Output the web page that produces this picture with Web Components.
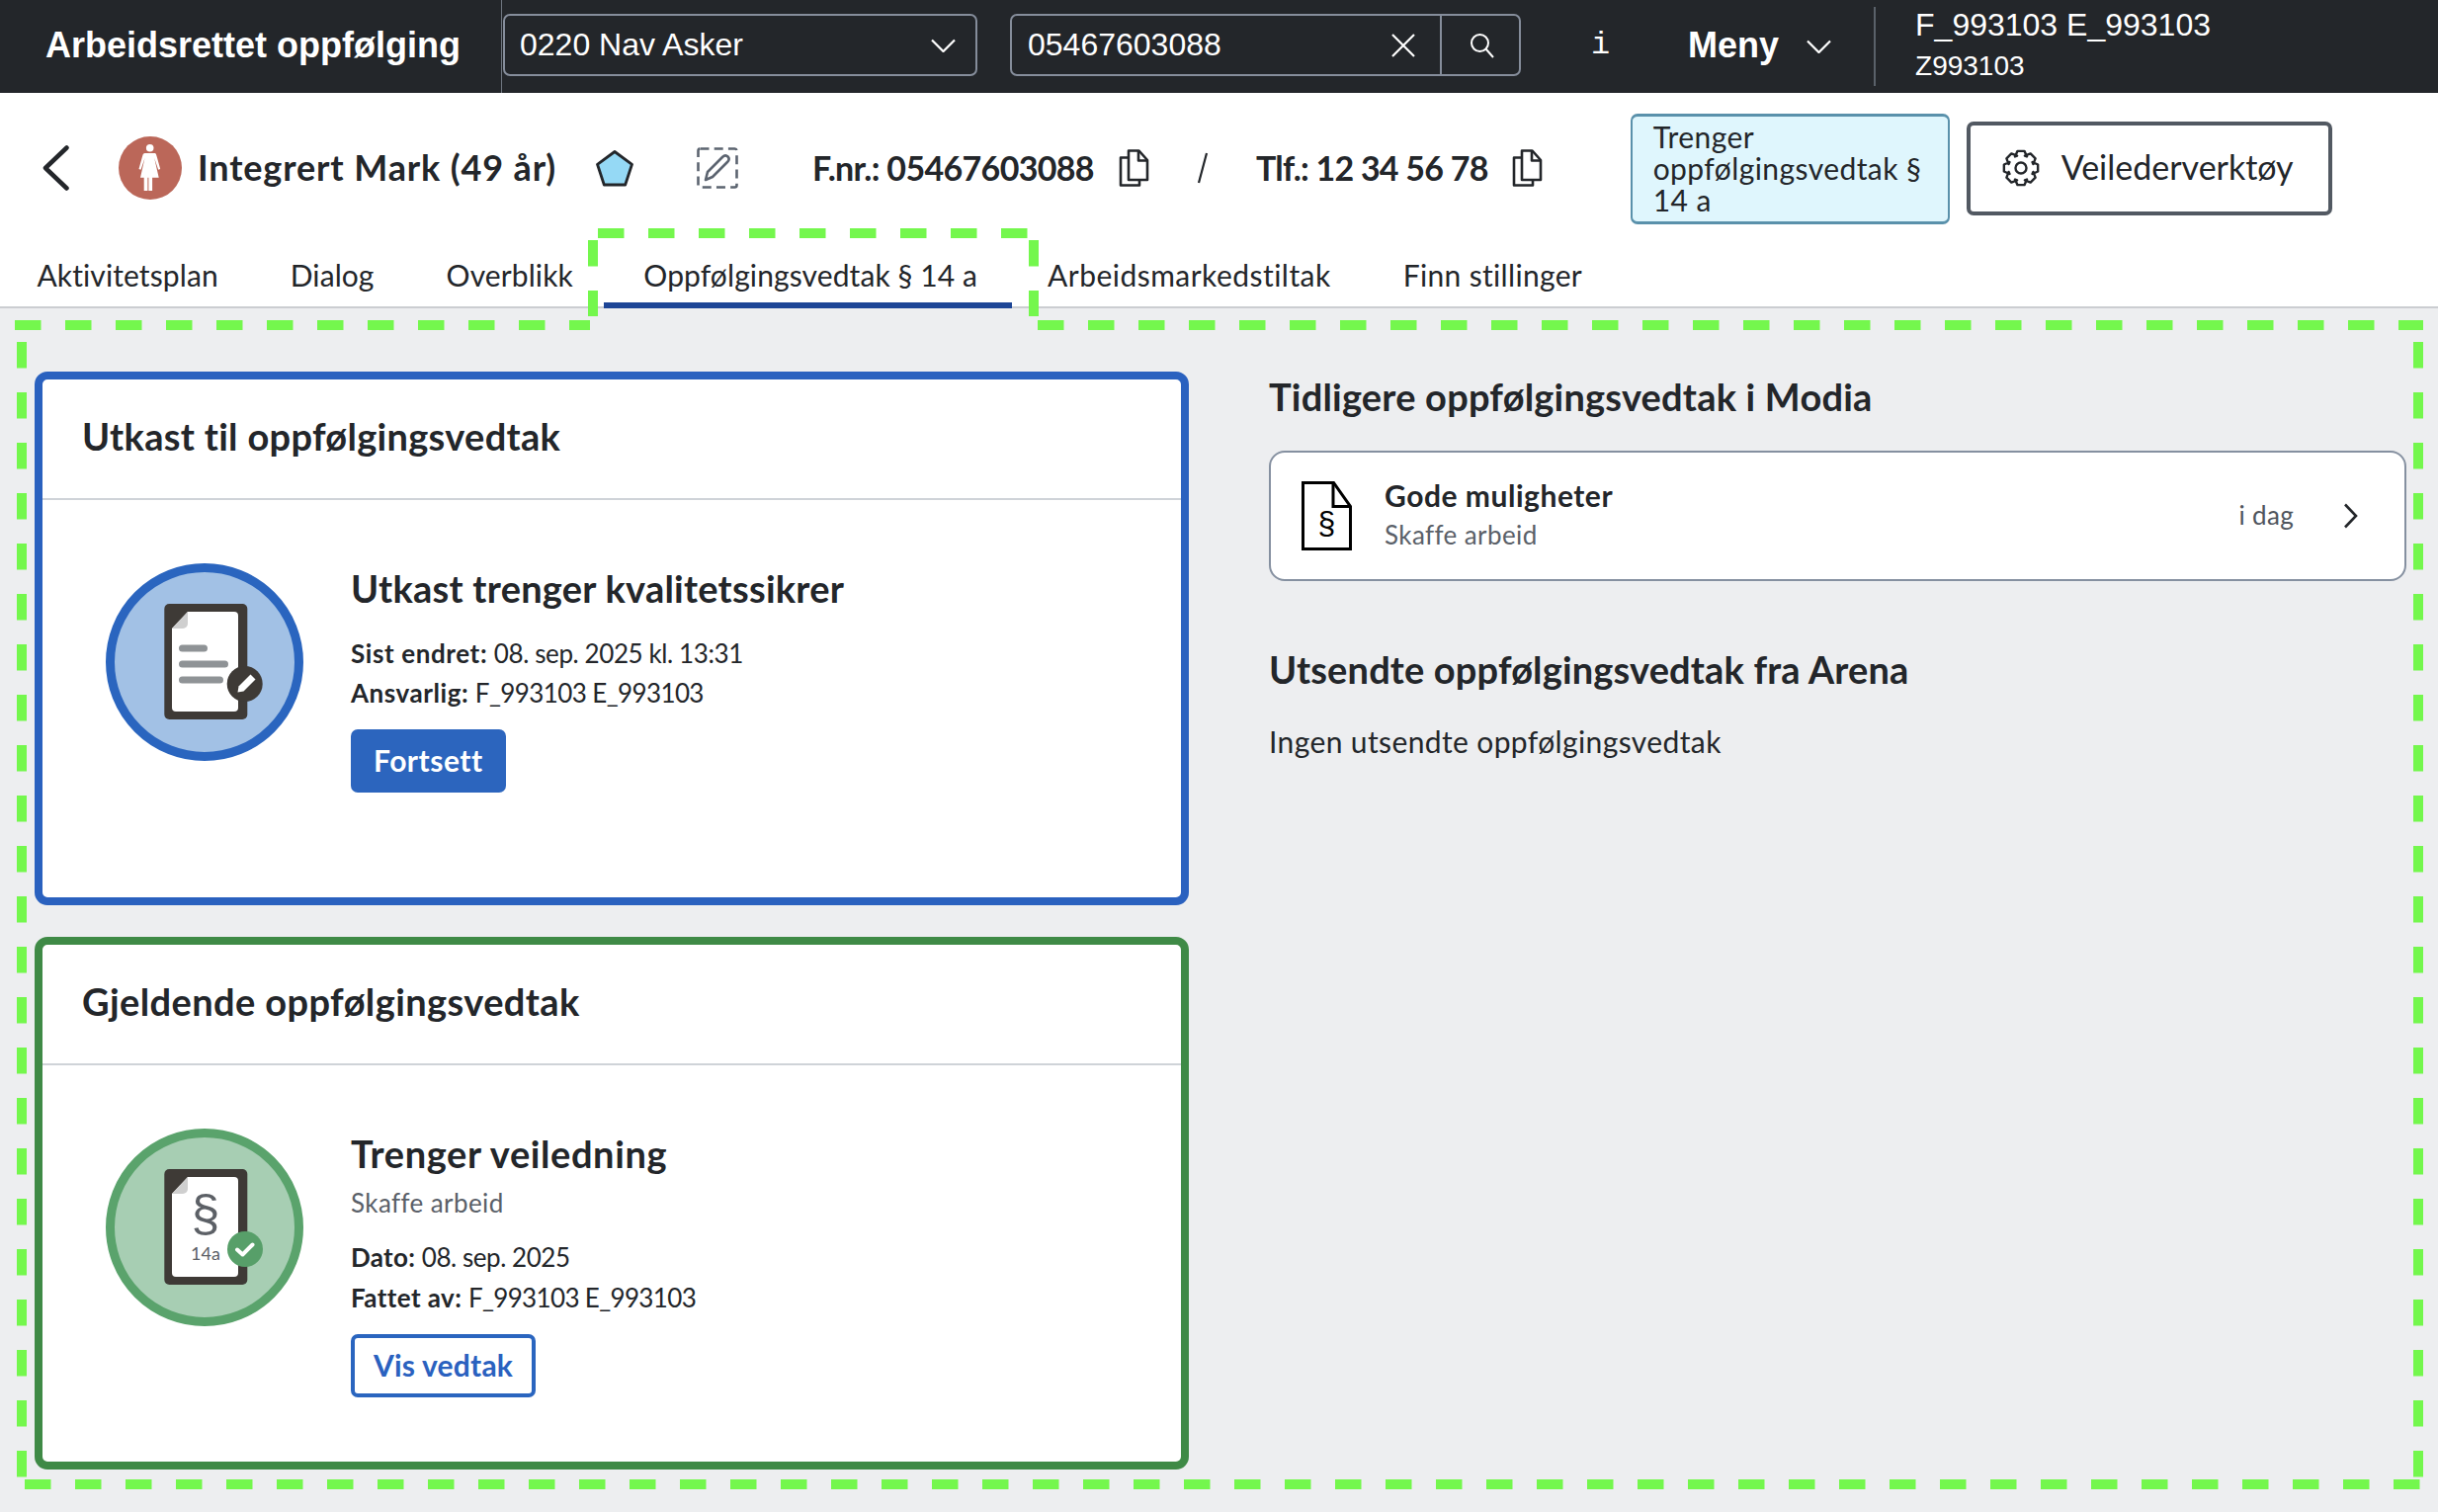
<!DOCTYPE html>
<html lang="no"><head><meta charset="utf-8"><title>Arbeidsrettet oppfølging</title>
<style>
html,body{margin:0;padding:0}
body{position:relative;width:2467px;height:1530px;overflow:hidden;background:#edeef0;color:#23262a;font-family:Lato,"Noto Sans",sans-serif}
</style></head><body>
<app-header></app-header>
<person-bar></person-bar>
<nav-tabs>
  <nav-tab style="letter-spacing:.1px">Aktivitetsplan</nav-tab>
  <nav-tab style="letter-spacing:.1px">Dialog</nav-tab>
  <nav-tab style="letter-spacing:.1px">Overblikk</nav-tab>
  <nav-tab active style="letter-spacing:.1px">Oppfølgingsvedtak § 14 a</nav-tab>
  <nav-tab style="letter-spacing:.47px">Arbeidsmarkedstiltak</nav-tab>
  <nav-tab style="letter-spacing:.33px">Finn stillinger</nav-tab>
</nav-tabs>
<page-main>
  <vedtak-card slot="left" color="#2a61bf">
    <span slot="title" style="letter-spacing:.3px">Utkast til oppfølgingsvedtak</span>
    <doc-art slot="art" kind="draft"></doc-art>
    <card-title style="letter-spacing:.25px">Utkast trenger kvalitetssikrer</card-title>
    <info-line style="margin-top:22px"><b style="letter-spacing:.6px">Sist endret:</b> <span style="letter-spacing:-.4px">08. sep. 2025 kl. 13:31</span></info-line>
    <info-line><b style="letter-spacing:.55px">Ansvarlig:</b> <span style="letter-spacing:-.6px">F_993103 E_993103</span></info-line>
    <action-button variant="primary" style="margin-top:17px;letter-spacing:.5px">Fortsett</action-button>
  </vedtak-card>
  <vedtak-card slot="left" color="#3f8a46">
    <span slot="title" style="letter-spacing:.4px">Gjeldende oppfølgingsvedtak</span>
    <doc-art slot="art" kind="final"></doc-art>
    <card-title style="letter-spacing:.6px">Trenger veiledning</card-title>
    <info-line style="margin-top:6px;color:#5a6068;letter-spacing:.4px">Skaffe arbeid</info-line>
    <info-line style="margin-top:15px"><b style="letter-spacing:.3px">Dato:</b> <span style="letter-spacing:-.45px">08. sep. 2025</span></info-line>
    <info-line style="margin-top:1px"><b style="letter-spacing:.4px">Fattet av:</b> <span style="letter-spacing:-.65px">F_993103 E_993103</span></info-line>
    <action-button variant="secondary" style="margin-top:17px;letter-spacing:.2px">Vis vedtak</action-button>
  </vedtak-card>
  <section-heading slot="right" style="letter-spacing:.2px">Tidligere oppfølgingsvedtak i Modia</section-heading>
  <history-item slot="right" style="margin-top:26px"></history-item>
  <section-heading slot="right" style="margin-top:64px;letter-spacing:.15px">Utsendte oppfølgingsvedtak fra Arena</section-heading>
  <plain-text slot="right" style="margin-top:24px;letter-spacing:.38px">Ingen utsendte oppfølgingsvedtak</plain-text>
</page-main>
<highlight-frame></highlight-frame>
<script>
function def(name, html, setup){
  const t=document.createElement('template'); t.innerHTML=html;
  customElements.define(name,class extends HTMLElement{
    connectedCallback(){ if(this.shadowRoot) return;
      this.attachShadow({mode:'open'}).appendChild(t.content.cloneNode(true));
      if(setup) setup(this,this.shadowRoot);
    }
  });
}
const chev='<svg width="25" height="14" viewBox="0 0 25 14" fill="none" stroke="#fff" stroke-width="2.2"><path d="M1 1.5l11.5 11.5L24 1.5"/></svg>';
const copy='<svg width="31" height="38" viewBox="0 0 31 38" fill="none" stroke="#23262a" stroke-width="2.6" stroke-linejoin="round"><path d="M10 1.5h10.5l8.5 9.5v20H10z"/><path d="M20 1.5v10h9"/><path d="M10 8.5H2v28h19V31"/></svg>';

def('app-header',`<style>
:host{display:flex;height:94px;background:#23262a;color:#fff;font-family:"Liberation Sans",Arial,sans-serif;align-items:center}
.t{width:461px;padding-left:46px;font:700 36px/91px "Liberation Sans",Arial,sans-serif;height:94px}
.v{width:1px;height:94px;background:#6f7680}
.box{height:63px;margin-top:-3px;box-sizing:border-box;border:2px solid #858d9b;border-radius:7px;display:flex;align-items:center;font-size:32px}
.sel{width:480px;margin-left:1px;padding:0 20px 0 15px;justify-content:space-between}
.srch{width:517px;margin-left:33px;padding-left:16px}
.srch .q{flex:1}
.x{margin-right:25px;display:flex}
.b{width:80px;height:100%;border-left:2px solid #858d9b;display:flex;align-items:center;justify-content:center;padding-left:3px;box-sizing:border-box}
.i{width:161px;text-align:center;font:400 32px "Liberation Mono",monospace;margin-right:8px;margin-top:-3px}
.m{font-weight:700;font-size:36px;margin-top:-2px}
.c{margin-left:28px;display:flex;margin-right:43px}
.s{width:2px;height:80px;background:#5a616a}
.u{margin-left:40px;align-self:flex-start;padding-top:5px;font-size:32px;line-height:41px}
.z{font-size:28px}
</style>
<div class="t">Arbeidsrettet oppfølging</div><div class="v"></div>
<div class="box sel"><span>0220 Nav Asker</span>${chev}</div>
<div class="box srch"><span class="q">05467603088</span>
<span class="x"><svg width="24" height="24" viewBox="0 0 24 24" stroke="#fff" stroke-width="2.2"><path d="M1 1l22 22M23 1L1 23"/></svg></span>
<span class="b"><svg width="25" height="26" viewBox="0 0 25 26" fill="none" stroke="#fff" stroke-width="2"><circle cx="10.5" cy="10.5" r="8.5"/><path d="M16.5 16.5l7.5 8.5"/></svg></span></div>
<div class="i">i</div><div class="m">Meny</div><div class="c">${chev}</div><div class="s"></div>
<div class="u"><div>F_993103 E_993103</div><div class="z">Z993103</div></div>`);

def('person-bar',`<style>
:host{display:flex;align-items:center;height:152px;background:#fff;padding-left:43px;font-size:36px;font-weight:700}
svg{display:block;flex:none}
.n{margin-left:16px;letter-spacing:.86px;white-space:nowrap;margin-top:-2px}
.f{letter-spacing:-.67px;font-size:34px;white-space:nowrap;margin-top:-2px}
.tag{width:323px;height:112px;margin-top:1px;box-sizing:border-box;background:#dff6fd;border:2px solid #5a91ab;border-top-width:3px;border-bottom-width:3px;border-radius:7px;padding:4px 10px 0 21px;font:400 30px/32px Lato,sans-serif;letter-spacing:.42px}
.btn{margin-left:17px;width:370px;height:95px;box-sizing:border-box;border:4px solid #525962;border-radius:7px;display:flex;align-items:center;padding-left:32px;font:400 34px Lato,sans-serif}
.btn span{margin-left:22px;margin-top:-3px}
</style>
<svg width="27" height="46" viewBox="0 0 27 46" fill="none" stroke="#23262a" stroke-width="4.5" stroke-linecap="round" stroke-linejoin="round"><path d="M24.5 2.5L3 23l21.5 20.5"/></svg>
<svg style="margin-left:50px" width="64" height="64" viewBox="0 0 64 64"><circle cx="32" cy="32" r="32" fill="#bb6759"/><circle cx="31.7" cy="11.7" r="3.8" fill="#fff"/><path fill="#fff" d="M27.5 17h8.6c1 0 1.6.5 2 1.4l.9 3 3.2 11.6-2 .8-4-11.8 4.5 19.7h-6.600V55h-3.700V41.700h-1V55h-3.700V41.700H22L26.500 22 22.500 33.800l-2-.8 3.200-11.600.9-3c.4-.9 1.900-1.400 2.900-1.400z"/></svg>
<div class="n">Integrert Mark (49 år)</div>
<svg style="margin-left:40px" width="38" height="37" viewBox="0 0 38 37"><path d="M19 1.500l17.500 12.800-6.800 20.700H8.300L1.500 14.300z" fill="#95d9f5" stroke="#23262a" stroke-width="2.800" stroke-linejoin="round"/></svg>
<svg style="margin-left:64px" width="42" height="42" viewBox="0 0 42 42" fill="none" stroke="#5c6470" stroke-width="2.600"><rect x="1.500" y="1.500" width="39" height="39" rx="2" stroke-dasharray="9 5.200"/><path d="M9 33l2-8 15-15c2-2 4-2 5.500-.5S33 13 31 15L16 30z" stroke-linejoin="round"/></svg>
<div class="f" style="margin-left:75px">F.nr.: 05467603088</div>
<div style="margin-left:25px">${copy}</div>
<svg style="margin-left:48px" width="12" height="32" viewBox="0 0 12 32" stroke="#23262a" stroke-width="2.200"><path d="M10 1L2 31"/></svg>
<div class="f" style="margin-left:48px;letter-spacing:-.76px">Tlf.: 12 34 56 78</div>
<div style="margin-left:24px">${copy}</div>
<div class="tag" style="margin-left:89px">Trenger oppfølgingsvedtak § 14 a</div>
<div class="btn"><svg width="38" height="38" viewBox="-19 -19 38 38" fill="none" stroke="#23262a" stroke-width="2.400" stroke-linejoin="round"><path id="g"/><circle r="5.500"/></svg><span>Veilederverktøy</span></div>`,
(h,s)=>{let d='';const n=8,ro=17.5,ri=13;for(let k=0;k<n;k++){const a=k*2*Math.PI/n-Math.PI/2,w=.2,g=.48;
 const pts=[[ri,a-g],[ro,a-w],[ro,a+w],[ri,a+g]];pts.forEach(([r,t],j)=>{d+=(k==0&&j==0?'M':'L')+(r*Math.cos(t)).toFixed(2)+' '+(r*Math.sin(t)).toFixed(2);});}
 s.getElementById('g').setAttribute('d',d+'Z');});

def('nav-tabs',`<style>:host{display:flex;height:66px;background:#fff;padding-left:1px;box-sizing:border-box;border-bottom:2px solid #cbcdd1}</style><slot></slot>`);
def('nav-tab',`<style>
:host{display:block;height:66px;box-sizing:border-box;padding:13px 36.500px 0;font-size:30px;line-height:38px;white-space:nowrap;flex:none}
:host([active]){margin-left:-5px;padding:13px 34.500px 0 40px;border-bottom:6px solid #1d4596}
</style><slot></slot>`);

def('page-main',`<style>
:host{display:grid;grid-template-columns:1168px 1151px;column-gap:81px;padding:64px 32px 0 35px}
.l{display:grid;grid-template-rows:540px 539px;row-gap:32px}
.r{display:block}
</style><div class="l"><slot name="left"></slot></div><div class="r"><slot name="right"></slot></div>`);

def('vedtak-card',`<style>
:host{display:flex;flex-direction:column;background:#fff;border:8px solid var(--c);border-radius:13px;box-sizing:border-box;min-height:0}
.h{height:122px;box-sizing:border-box;padding:35px 0 0 40px;font:700 38px/44px Lato,sans-serif;border-bottom:2px solid #cfd3d8}
.b{display:flex;padding:64px 0 0 64px;gap:48px}
.t{padding-top:3px}
</style><div class="h"><slot name="title"></slot></div><div class="b"><slot name="art"></slot><div class="t"><slot></slot></div></div>`,
(h)=>h.style.setProperty('--c',h.getAttribute('color')));

def('card-title',`<style>:host{display:block;font:700 38px/44px Lato,sans-serif;white-space:nowrap;padding-bottom:2px}</style><slot></slot>`);
def('info-line',`<style>:host{display:block;font-size:26px;line-height:40px;white-space:nowrap}::slotted(b){font-weight:700}</style><slot></slot>`);
def('action-button',`<style>
:host{display:inline-flex;align-items:center;height:64px;box-sizing:border-box;padding:0 23px 3px;border-radius:7px;font-size:30px;font-weight:700}
:host([variant=primary]){background:#2c65be;color:#fff}
:host([variant=secondary]){background:#fff;color:#2a61bf;border:4px solid #2a65bf;padding:0 19px 3px}
</style><slot></slot>`);
def('section-heading',`<style>:host{display:block;font:700 38px/51px Lato,sans-serif;white-space:nowrap;padding-bottom:3px}</style><slot></slot>`);
def('plain-text',`<style>:host{display:block;font-size:30px;line-height:40px}</style><slot></slot>`);

def('history-item',`<style>
:host{display:flex;align-items:center;height:132px;box-sizing:border-box;background:#fff;border:2px solid #8590a0;border-radius:16px;padding:0 47px 0 31px}
svg{flex:none;display:block}
.m{margin-left:33px;flex:1;margin-top:-3px}
.a{font:700 30px/40px Lato,sans-serif;letter-spacing:.53px}
.s{font-size:26px;line-height:40px;color:#5a6068;letter-spacing:.4px}
.d{font-size:26px;color:#4f555d;letter-spacing:.3px;margin-right:50px;margin-top:-2px}
text{font-family:"Liberation Sans",sans-serif}
</style>
<svg width="51" height="70" viewBox="0 0 51 70" fill="none" stroke="#000" stroke-width="3"><path d="M1.500 1.500h31l17 24v43h-48z"/><path d="M32 1.500v24h18"/><text x="25.500" y="53" text-anchor="middle" font-size="32" fill="#000" stroke="none">§</text></svg>
<div class="m"><div class="a">Gode muligheter</div><div class="s">Skaffe arbeid</div></div>
<div class="d">i dag</div>
<svg width="15" height="26" viewBox="0 0 15 26" fill="none" stroke="#23262a" stroke-width="2.600"><path d="M2 1.500l11 11.500L2 24.500"/></svg>`);

const sheet=`<rect x="59.300" y="41" width="84" height="117" rx="5" fill="#3e3a36"/>
<path d="M83 49h47a4 4 0 0 1 4 4v93a4 4 0 0 1-4 4H71a4 4 0 0 1-4-4V66z" fill="#fff"/><path d="M83 49v12a5 5 0 0 1-5 5H67z" fill="#cfcfcf"/>`;
const draft=`<circle cx="100" cy="100" r="95.500" fill="#a2c1e5" stroke="#2a65bf" stroke-width="9"/>${sheet}
<g stroke="#8f9396" stroke-width="7" stroke-linecap="round"><path d="M77.500 86h22M77.500 102h43M77.500 118h38"/></g>
<circle cx="140.700" cy="122" r="18" fill="#3e3a36"/><path d="M133.500 130.500l1-6 12-12 5 5-12 12z" fill="#fff"/>`;
const fin=`<circle cx="100" cy="100" r="95.500" fill="#a7ceb3" stroke="#5aa36c" stroke-width="9"/>${sheet}
<text x="101" y="104" text-anchor="middle" font-size="52" fill="#5c6066" style="font-family:'Liberation Sans',sans-serif">§</text>
<text x="101" y="133" text-anchor="middle" font-size="18" fill="#5c6066" style="font-family:Lato,sans-serif">14a</text>
<circle cx="141" cy="122" r="18" fill="#579f69"/><path d="M133 122.500l5.500 5 10-10" fill="none" stroke="#fff" stroke-width="4" stroke-linecap="round" stroke-linejoin="round"/>`;
def('doc-art',`<style>:host{display:block;width:200px;height:200px;flex:none}svg{display:block}</style><svg width="200" height="200" viewBox="0 0 200 200"></svg>`,
(h,s)=>{s.querySelector('svg').innerHTML=h.getAttribute('kind')==='draft'?draft:fin;});

def('highlight-frame',`<style>:host{position:absolute;left:0;top:0;width:2467px;height:1530px;pointer-events:none}svg{display:block}</style>
<svg width="2467" height="1530" fill="none" stroke="#74f74d" stroke-width="10" stroke-dasharray="26.500 24.500">
<path d="M605 236H1040"/><path d="M600 243V320"/><path d="M1046 243V320"/>
<path d="M15 329H597"/><path d="M1050 329H2452"/>
<path d="M22 346V1495"/><path d="M2447 346V1495"/><path d="M25 1502H2452"/></svg>`);
</script>
</body></html>
